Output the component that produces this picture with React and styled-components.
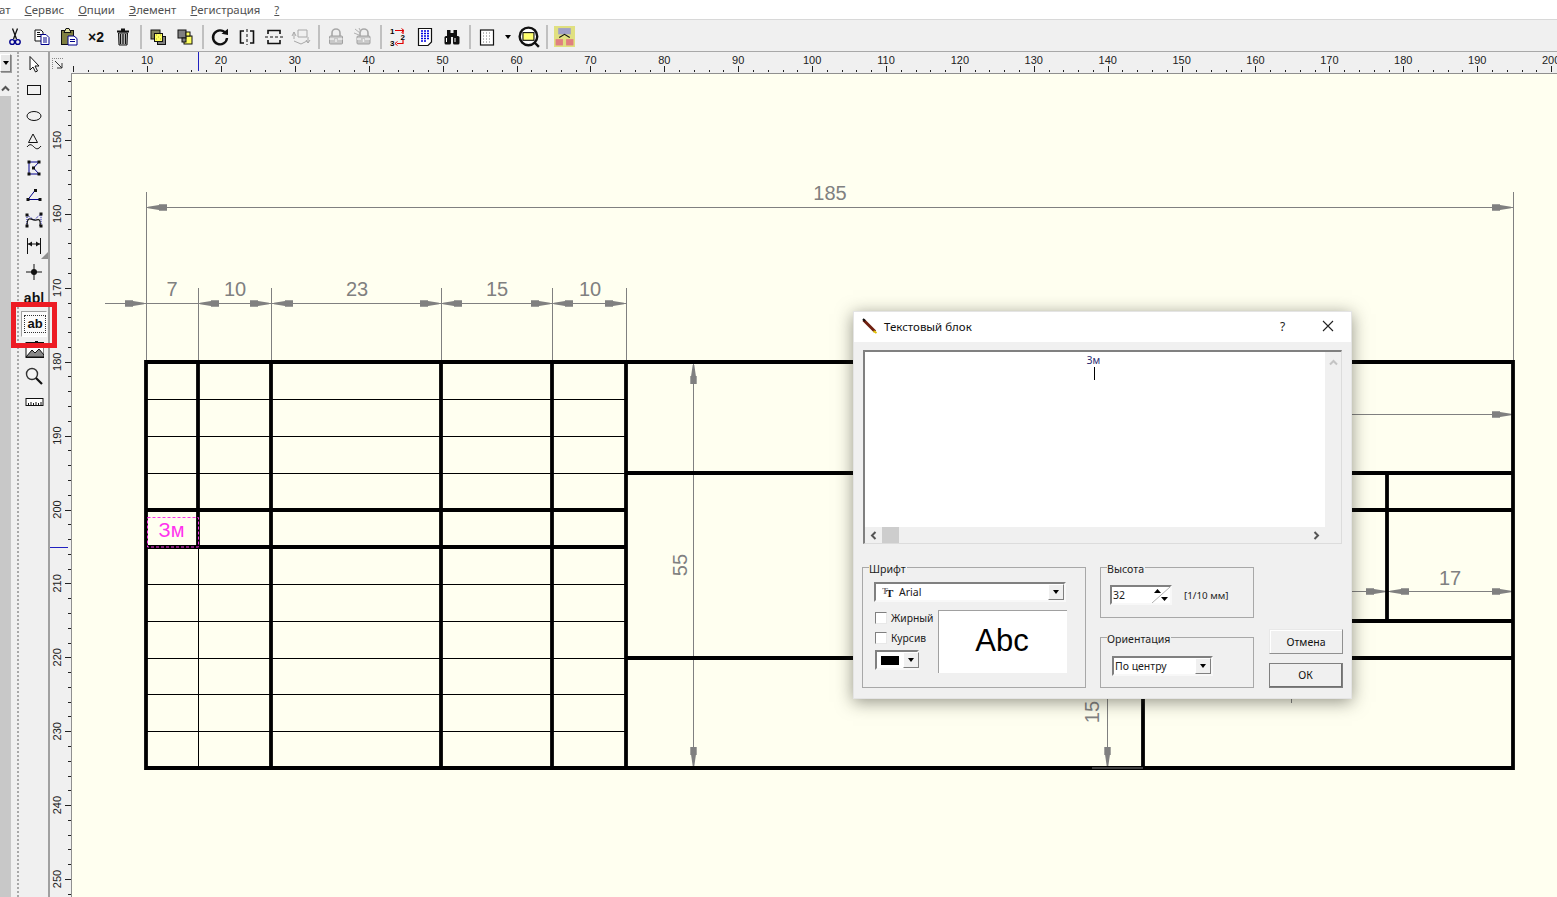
import React from "react";
import styled, { createGlobalStyle, css } from "styled-components";

const GlobalStyle = createGlobalStyle`
  html, body {
    margin: 0;
    padding: 0;
    background: #f0f0f0;
  }
  * {
    box-sizing: border-box;
  }
`;

const UI_FONT = `"Noto Sans", "Liberation Sans", sans-serif`;
const ARIAL = `"Liberation Sans", Arial, sans-serif`;

const sunken = css`
  border-style: solid;
  border-width: 2px;
  border-color: #808080 #f8f8f8 #f8f8f8 #808080;
`;

const raised = css`
  border-style: solid;
  border-width: 1px;
  border-color: #fff #808080 #808080 #fff;
  box-shadow: 1px 1px 0 #a0a0a0;
`;

const Page = styled.div`
  position: relative;
  width: 1557px;
  height: 897px;
  overflow: hidden;
  display: flex;
  flex-direction: column;
  background: #f0f0f0;
  font-family: ${UI_FONT};
  font-size: 11px;
  color: #202020;
`;

const MenuBar = styled.nav`
  height: 20px;
  display: flex;
  align-items: center;
  gap: 14px;
  margin-left: -1px;
  padding-bottom: 1px;
  background: #fff;
  border-bottom: 1px solid #d8d8d8;
  font-size: 11.4px;
  color: #505050;
`;

const MenuItem = styled.span`
  white-space: nowrap;
`;

const Toolbar = styled.div`
  height: 32px;
  display: flex;
  align-items: center;
  padding: 2px 0 0 1.5px;
  background: #f0f0f0;
  border-bottom: 1px solid #a8a8a8;
`;

const ToolBtn = styled.div`
  width: ${(p) => p.$w || 27}px;
  height: 26px;
  flex: none;
  display: flex;
  align-items: center;
  justify-content: center;
`;

const TimesTwo = styled.span`
  font-family: ${ARIAL};
  font-size: 14px;
  font-weight: 700;
  color: #111;
`;

const ToolSep = styled.div`
  width: 8px;
  height: 24px;
  flex: none;
  display: flex;
  justify-content: center;
  &::before {
    content: "";
    width: 2px;
    background: #c0c0c0;
  }
`;

const Workspace = styled.div`
  flex: 1;
  display: flex;
  min-height: 0;
`;

const LeftStrip = styled.div`
  width: 11px;
  flex: none;
  display: flex;
  flex-direction: column;
  padding-top: 2px;
`;

const StripCombo = styled.div`
  height: 18px;
  display: flex;
  align-items: center;
  justify-content: center;
  ${raised};
  background: #e8e8e8;
`;

const StripButton = styled.div`
  height: 16px;
  margin-top: 8px;
  display: flex;
  align-items: center;
  justify-content: center;
  background: #f0f0f0;
`;

const StripTrack = styled.div`
  flex: 1;
  background: #c8c8c8;
`;

const Gripper = styled.div`
  width: 9px;
  flex: none;
  height: 100%;
  border-right: 2px dotted #a8a8a8;
  transform: translateX(-1px);
`;

const Palette = styled.div`
  width: 28px;
  flex: none;
  margin-top: -1px;
  padding-left: 1px;
  display: flex;
  flex-direction: column;
  align-items: flex-start;
`;

const Tool = styled.div`
  position: relative;
  width: 26px;
  height: 26px;
  flex: none;
  display: flex;
  align-items: center;
  justify-content: center;
  border: 1px solid transparent;
  ${(p) =>
    p.$active &&
    css`
      background: #fbfbfb;
      border-color: #a0a0a0 #fff #fff #a0a0a0;
    `}
  ${(p) =>
    p.$flyout &&
    css`
      &::after {
        content: "";
        position: absolute;
        right: -2px;
        bottom: -1px;
        border-left: 7px solid transparent;
        border-bottom: 7px solid #909090;
      }
    `}
`;

const RulerArea = styled.div`
  flex: 1;
  display: grid;
  grid-template-columns: 21px 1fr;
  grid-template-rows: 21px 1fr;
  border-left: 2px solid #a0a0a0;
  min-width: 0;
`;

const Corner = styled.div`
  display: flex;
  align-items: center;
  justify-content: center;
  padding: 2px 6px 0 0;
`;

const HRuler = styled.svg`
  display: block;
  font-family: ${ARIAL};
  font-size: 11px;
`;

const VRuler = styled.svg`
  display: block;
  font-family: ${ARIAL};
  font-size: 11px;
`;

const Canvas = styled.div`
  position: relative;
  background: #fffff0;
  border-top: 1px solid #909090;
  border-left: 1px solid #909090;
  overflow: hidden;
`;

const Sheet = styled.svg`
  display: block;
`;

const Highlight = styled.div`
  position: absolute;
  left: 11px;
  top: 302px;
  width: 46px;
  height: 46px;
  border: 5px solid #ed1c24;
`;

const Dialog = styled.section`
  position: absolute;
  left: 853px;
  top: 311px;
  width: 499px;
  height: 388px;
  background: #f0f0f0;
  box-shadow: 0 3px 16px rgba(40, 40, 30, 0.5);
  border: 1px solid #e4e4e4;
  display: flex;
  flex-direction: column;
`;

const TitleBar = styled.header`
  height: 30px;
  flex: none;
  display: flex;
  align-items: center;
  background: #fff;
  padding: 0 1px 2px 8px;
`;

const TitleText = styled.span`
  margin-left: 6px;
  flex: 1;
  font-size: 11.5px;
  color: #111;
`;

const TitleBtn = styled.span`
  width: 45px;
  display: flex;
  align-items: center;
  justify-content: center;
  font-size: 12px;
  color: #222;
`;

const DialogBody = styled.div`
  flex: 1;
  padding: 8px 9px 0;
  display: flex;
  flex-direction: column;
`;

const TextBox = styled.div`
  height: 194px;
  flex: none;
  display: flex;
  flex-direction: column;
  ${sunken};
  border-bottom-width: 1px;
  border-right-width: 1px;
  border-bottom-color: #dcdcdc;
  border-right-color: #dcdcdc;
`;

const TextRow = styled.div`
  flex: 1;
  display: flex;
  min-height: 0;
`;

const TextArea = styled.div`
  flex: 1;
  background: #fff;
  display: flex;
  flex-direction: column;
  align-items: center;
  padding: 2px 3px 0 0;
  font-size: 10px;
  line-height: 12px;
  color: #2a2a70;
`;

const Caret = styled.i`
  display: block;
  width: 1px;
  height: 13px;
  background: #000;
  margin-top: 1px;
  margin-left: 1px;
`;

const VScroll = styled.div`
  width: 16px;
  flex: none;
  padding-top: 6px;
  display: flex;
  justify-content: center;
  align-items: flex-start;
`;

const HScroll = styled.div`
  height: 16px;
  flex: none;
  display: flex;
  align-items: center;
  padding-right: 20px;
`;

const ScrollEnd = styled.div`
  width: 17px;
  flex: none;
  display: flex;
  align-items: center;
  justify-content: center;
`;

const ScrollThumb = styled.div`
  width: 17px;
  height: 16px;
  flex: none;
  background: #cdcdcd;
`;

const ScrollGap = styled.div`
  flex: 1;
`;

const BottomRow = styled.div`
  display: flex;
  margin: 23px 0 0 -1px;
`;

const MiddleCol = styled.div`
  width: 154px;
  flex: none;
  margin-left: 14px;
  display: flex;
  flex-direction: column;
  gap: 19px;
`;

const ButtonCol = styled.div`
  width: 74px;
  flex: none;
  margin-left: 15px;
  display: flex;
  flex-direction: column;
  justify-content: flex-end;
  gap: 9px;
`;

const Group = styled.div`
  position: relative;
  flex: none;
  width: ${(p) => p.$w || "auto"};
  height: ${(p) => p.$h}px;
  padding: ${(p) => p.$pad};
  border: 1px solid #a8a8a8;
`;

const Legend = styled.span`
  position: absolute;
  top: -5px;
  left: 6px;
  padding-right: 1px;
  background: #f0f0f0;
  line-height: 12px;
  font-size: 10.6px;
  color: #222;
`;

const Combo = styled.div`
  width: ${(p) => p.$w}px;
  height: 20px;
  display: flex;
  align-items: center;
  background: #fff;
  ${sunken};
  padding-left: ${(p) => p.$pl || 0}px;
  gap: 3px;
`;

const ComboValue = styled.span`
  flex: 1;
  white-space: nowrap;
  font-size: 10.5px;
`;

const ComboButton = styled.span`
  width: 16px;
  height: 16px;
  flex: none;
  display: flex;
  align-items: center;
  justify-content: center;
  background: #f0f0f0;
  ${raised};
  box-shadow: none;
`;

const Triangle = styled.i`
  display: block;
  width: 0;
  height: 0;
  border-left: 3.5px solid transparent;
  border-right: 3.5px solid transparent;
  border-top: 4px solid #000;
`;

const FontOptions = styled.div`
  display: flex;
  margin-top: 8px;
`;

const OptionCol = styled.div`
  width: 64px;
  flex: none;
  margin-top: -2px;
`;

const CheckRow = styled.label`
  height: 20px;
  display: flex;
  align-items: center;
  gap: 4px;
  padding-left: 1px;
  white-space: nowrap;
  font-size: 10.3px;
`;

const CheckBox = styled.span`
  width: 12px;
  height: 12px;
  flex: none;
  background: #fff;
  border-style: solid;
  border-width: 1px;
  border-color: #808080 #e8e8e8 #e8e8e8 #808080;
`;

const ColorCombo = styled.div`
  width: 44px;
  height: 20px;
  margin: 2px 0 0 1px;
  display: flex;
  align-items: center;
  gap: 4px;
  padding-left: 4px;
  background: #fff;
  ${sunken};
`;

const Swatch = styled.span`
  width: 18px;
  height: 9px;
  flex: none;
  background: #000;
`;

const Preview = styled.div`
  width: 129px;
  height: 63px;
  padding: 0 2px 2px 0;
  display: flex;
  align-items: center;
  justify-content: center;
  background: #fff;
  border-top: 1px solid #a0a0a0;
  border-left: 1px solid #a0a0a0;
  font-family: ${ARIAL};
  font-size: 31px;
  color: #000;
`;

const SpinRow = styled.div`
  display: flex;
  align-items: center;
  gap: 12px;
`;

const SpinBox = styled.div`
  width: 62px;
  height: 20px;
  display: flex;
  align-items: center;
  justify-content: space-between;
  padding-left: 1px;
  background: #fff;
  ${sunken};
  font-size: 10.5px;
`;

const Units = styled.span`
  font-size: 9.8px;
`;

const DlgButton = styled.button`
  width: 74px;
  height: 25px;
  padding: 0;
  background: #f0f0f0;
  font-family: inherit;
  font-size: 10.5px;
  color: #111;
  border-style: solid;
  border-width: 1px;
  border-color: #fff #808080 #808080 #fff;
  ${(p) =>
    p.$default
      ? css`
          outline: 1px solid #808080;
          outline-offset: -1px;
          border-width: 1px 2px 2px 1px;
          border-color: #909090 #707070 #707070 #909090;
        `
      : css`
          border-color: #e8e8e8 #909090 #909090 #e8e8e8;
          box-shadow: inset 1px 1px 0 #fff;
        `}
`;

const Chev = ({ dir = "up", color = "#555", size = 9 }) => {
  const rot = { up: 0, right: 90, down: 180, left: 270 }[dir];
  return (
    <svg width={size} height={size} viewBox="0 0 9 9">
      <path
        d="M1 6.5 L4.5 3 L8 6.5"
        fill="none"
        stroke={color}
        strokeWidth="2"
        transform={`rotate(${rot} 4.5 4.5)`}
      />
    </svg>
  );
};

const Ico = ({ children, size = 20 }) => (
  <svg width={size} height={size} viewBox="0 0 20 20">
    {children}
  </svg>
);

const icons = {
  cut: (
    <Ico>
      <path d="M7.5 1.5 L11.5 12 M12.5 1.5 L8.5 12" stroke="#111" strokeWidth="1.3" fill="none" />
      <circle cx="7.2" cy="15" r="2.4" stroke="#00008c" strokeWidth="1.4" fill="none" />
      <circle cx="12.8" cy="15" r="2.4" stroke="#00008c" strokeWidth="1.4" fill="none" />
    </Ico>
  ),
  copy: (
    <Ico>
      <path d="M3 3 H9 L11 5 V14 H3 Z" fill="#fff" stroke="#111" />
      <path d="M5 5.5 H8 M5 7.5 H9 M5 9.5 H9" stroke="#111" />
      <path d="M9 7.5 H14 L17 10.5 V17.5 H9 Z" fill="#fff" stroke="#00008c" />
      <path d="M11 11 H15 M11 13 H15 M11 15 H15" stroke="#00008c" />
    </Ico>
  ),
  paste: (
    <Ico>
      <rect x="2.5" y="3.5" width="12" height="14" fill="#808040" stroke="#111" />
      <path d="M5 5.5 L7 1.5 H10 L12 5.5 Z" fill="#e0e0a0" stroke="#111" />
      <path d="M9 9 H15 L18 11.5 V18 H9 Z" fill="#fff" stroke="#00008c" />
      <path d="M11 12.5 H16 M11 14.5 H16" stroke="#00008c" />
    </Ico>
  ),
  trash: (
    <Ico>
      <path d="M8 2.5 H12 M4 4.5 H16" stroke="#111" strokeWidth="1.8" />
      <path d="M5.5 6 H14.5 L14 18 H6 Z" fill="#d0d0d0" stroke="#111" />
      <path d="M7.5 7 V17 M10 7 V17 M12.5 7 V17" stroke="#111" strokeWidth="1.3" />
    </Ico>
  ),
  front: (
    <Ico>
      <rect x="3" y="3" width="9" height="9" fill="#808060" stroke="#111" />
      <rect x="9.5" y="9.5" width="8" height="8" fill="#808080" stroke="#111" />
      <rect x="6.5" y="6.5" width="8" height="8" fill="#ffff60" stroke="#111" />
      <path d="M8 8 H9 M10 10 H11 M12 8 H13 M8 12 H9 M12 12 H13" stroke="#b0b030" />
    </Ico>
  ),
  back: (
    <Ico>
      <rect x="9" y="9" width="8" height="8" fill="#ffff60" stroke="#111" />
      <rect x="3" y="3" width="8" height="8" fill="#808080" stroke="#111" />
      <rect x="11" y="5" width="4" height="4" fill="#ffff60" stroke="#111" />
      <rect x="7" y="11" width="4" height="4" fill="#808080" stroke="#111" />
    </Ico>
  ),
  rotate: (
    <Ico>
      <path d="M15.5 6 A7 7 0 1 0 17 11" fill="none" stroke="#111" strokeWidth="2.4" />
      <path d="M11.5 6.8 L18 8 V1.8 Z" fill="#111" />
    </Ico>
  ),
  mirrorH: (
    <Ico>
      <path d="M7 4 H3.5 V16 H7 M13 4 H16.5 V16 H13" fill="none" stroke="#111" strokeWidth="1.6" />
      <path d="M10 2 V18" stroke="#111" strokeDasharray="3 2" />
    </Ico>
  ),
  mirrorV: (
    <Ico>
      <path d="M4 7 V3.5 H16 V7 M4 13 V16.5 H16 V13" fill="none" stroke="#111" strokeWidth="1.6" />
      <path d="M1 10 H19" stroke="#111" strokeDasharray="3 2" />
    </Ico>
  ),
  transform: (
    <Ico>
      <path d="M7 3 H16 V10 H7 Z M1 9 L3 5 L5 9 M3 5 V12 M15 13 L17 16 L19 13 M17 10 V16 M3 14 L10 17 L16 14" fill="none" stroke="#a8a8a8" />
    </Ico>
  ),
  lock: (
    <Ico>
      <path d="M6 9 V6 A4 4 0 0 1 14 6 V9" fill="none" stroke="#a8a8a8" strokeWidth="1.6" />
      <rect x="3.5" y="9" width="13" height="8" rx="1" fill="#c8c8c8" stroke="#a0a0a0" />
      <path d="M3.5 12 H8 M12 12 H16.5 M10 12 V15" stroke="#f0f0f0" strokeWidth="1.4" />
    </Ico>
  ),
  unlock: (
    <Ico>
      <path d="M7 9 V6 A4 4 0 0 1 15 6 V9" fill="none" stroke="#a8a8a8" strokeWidth="1.6" />
      <path d="M2 2 L7 6 M1 6 L6 8 M6 1 L8 5" stroke="#b0b0b0" />
      <rect x="4" y="9" width="13" height="8" rx="1" fill="#c8c8c8" stroke="#a0a0a0" />
      <path d="M4 12 H8 M12 12 H17 M10.5 12 V15" stroke="#f0f0f0" strokeWidth="1.4" />
    </Ico>
  ),
  order: (
    <Ico>
      <path d="M7 3.5 H15 V7 M15 13 V16.5 H9" fill="none" stroke="#e00000" strokeWidth="1.2" />
      <path d="M13.5 1.5 L16 3.5 L13.5 5.5 M9.5 14.5 L7 16.5 L9.5 18.5" fill="none" stroke="#e00000" />
      <text x="2" y="7" fontFamily={ARIAL} fontSize="8" fontWeight="700">1</text>
      <text x="12.5" y="12.5" fontFamily={ARIAL} fontSize="8" fontWeight="700">2</text>
      <text x="2" y="19" fontFamily={ARIAL} fontSize="8" fontWeight="700">3</text>
    </Ico>
  ),
  listing: (
    <Ico>
      <path d="M3.5 1.5 H16.5 V15 L13 18.5 H3.5 Z" fill="#fff" stroke="#111" strokeWidth="1.2" />
      <path d="M6 4 H14 M6 6.5 H14 M6 9 H14 M6 11.5 H14 M6 14 H11" stroke="#0000e0" strokeWidth="1.3" strokeDasharray="2 1" />
    </Ico>
  ),
  find: (
    <Ico>
      <rect x="5" y="3" width="3.5" height="8" fill="#111" />
      <rect x="11.5" y="3" width="3.5" height="8" fill="#111" />
      <rect x="8" y="6" width="4" height="4" fill="#111" />
      <rect x="2.5" y="9" width="6.5" height="8.5" rx="1.5" fill="#111" />
      <rect x="11" y="9" width="6.5" height="8.5" rx="1.5" fill="#111" />
      <path d="M4.5 11 V15 M13 11 V15" stroke="#fff" />
    </Ico>
  ),
  grid: (
    <Ico>
      <rect x="3.5" y="3" width="13" height="15" fill="#fff" stroke="#111" strokeWidth="1.2" />
      <path d="M6 6 H14 M6 9 H14 M6 12 H14 M6 15 H14" stroke="#777" strokeDasharray="1 2" />
    </Ico>
  ),
  zoomFit: (
    <Ico size={22}>
      <circle cx="9.5" cy="9.5" r="8" fill="#fff" stroke="#111" strokeWidth="2.2" />
      <rect x="4.5" y="6" width="10" height="7" fill="#ffff70" stroke="#111" />
      <path d="M15 15 L19 19" stroke="#111" strokeWidth="2.2" />
    </Ico>
  ),
  tree: (
    <Ico size={21}>
      <rect width="20" height="20" fill="#e0e080" />
      <rect x="4" y="2" width="12" height="6" fill="#a0a0c8" />
      <rect x="1.5" y="12.5" width="7" height="6" fill="#e08080" />
      <rect x="11.5" y="12.5" width="7" height="6" fill="#e08080" />
      <path d="M5 11 L10 8 L15 11" fill="none" stroke="#111" />
    </Ico>
  ),
};

const palette = {
  arrow: (
    <Ico>
      <path d="M6 2.5 V16 L9 13 L11.5 18 L13.5 17 L11 12 H15 Z" fill="#fff" stroke="#111" />
    </Ico>
  ),
  rect: (
    <Ico>
      <rect x="3.5" y="5.5" width="13" height="9" fill="none" stroke="#111" />
    </Ico>
  ),
  ellipse: (
    <Ico>
      <ellipse cx="10" cy="10" rx="7" ry="4.5" fill="none" stroke="#111" />
    </Ico>
  ),
  polygon: (
    <Ico>
      <path d="M9 2 L13.5 10.5 H4.5 Z" fill="none" stroke="#111" />
      <path d="M3 15 C6 11 8 13 10 15 S14 18 17 14" fill="none" stroke="#111" />
    </Ico>
  ),
  poly: (
    <Ico>
      <path d="M5 4 L15 4 L9.5 10 L15 16 H5 Z" fill="none" stroke="#00008c" />
      <path d="M3.5 2.5 h3 v3 h-3 z M13.5 2.5 h3 v3 h-3 z M8 8.5 h3 v3 h-3 z M13.5 14.5 h3 v3 h-3 z M3.5 14.5 h3 v3 h-3 z" fill="#111" />
    </Ico>
  ),
  polyline: (
    <Ico>
      <path d="M4 15.5 L11 6.5 M4 15.5 H16" fill="none" stroke="#00008c" />
      <path d="M2.5 14 h3 v3 h-3 z M10 5 h3 v3 h-3 z M14.5 14 h3 v3 h-3 z" fill="#111" />
    </Ico>
  ),
  bezier: (
    <Ico>
      <path d="M3 16 L3 5 L10 10 L17 4 L17 16" fill="none" stroke="#00a" strokeDasharray="1 1" />
      <path d="M3 16 C3 6 7 9 10 10 S17 6 16 16" fill="none" stroke="#111" strokeWidth="1.2" />
      <path d="M1.5 3.5 h3 v3 h-3 z M15.5 2.5 h3 v3 h-3 z M1.5 14.5 h3 v3 h-3 z M15.5 14.5 h3 v3 h-3 z" fill="#111" />
    </Ico>
  ),
  dim: (
    <Ico>
      <path d="M3.5 2 V18 M16.5 2 V18 M4 8 H16" stroke="#111" />
      <path d="M4 8 L8 5.5 V10.5 Z M16 8 L12 5.5 V10.5 Z" fill="#111" />
    </Ico>
  ),
  node: (
    <Ico>
      <path d="M10 2 V18 M2 10 H18" stroke="#111" />
      <circle cx="10" cy="10" r="3" fill="#111" />
    </Ico>
  ),
  image: (
    <Ico>
      <rect x="2" y="2.5" width="18" height="15" fill="#fff" stroke="#111" />
      <path d="M2 17 L8 10 L11 13 L15 9 L20 15 V17 Z" fill="#888" stroke="#111" />
      <path d="M11 1 H14 V6 H11 Z" fill="#111" />
    </Ico>
  ),
  zoom: (
    <Ico>
      <circle cx="8" cy="8" r="5.5" fill="#f4f4f4" stroke="#333" strokeWidth="1.4" />
      <path d="M12 12 L18 18" stroke="#111" strokeWidth="2.2" />
    </Ico>
  ),
  ruler: (
    <Ico>
      <rect x="2" y="6.5" width="17" height="7" fill="#fff" stroke="#111" />
      <path d="M4.5 11 V13 M7 10 V13 M9.5 11 V13 M12 10 V13 M14.5 11 V13 M17 10 V13" stroke="#111" />
    </Ico>
  ),
};

const AbText = styled.span`
  font-family: ${ARIAL};
  font-weight: 700;
  font-size: 14px;
  line-height: 14px;
  color: #111;
  ${(p) =>
    p.$boxed &&
    css`
      outline: 1px dotted #333;
      padding: 1px 2px;
      margin-left: 2px;
      font-size: 13px;
    `}
`;

const toolbarItems = [
  "cut", "copy", "paste", "x2", "trash", "|",
  "front", "back", "|",
  "rotate", "mirrorH", "mirrorV", "transform", "|",
  "lock", "unlock", "|",
  "order", "listing", "find", "|",
  "grid", "drop", "zoomFit", "|",
  "tree",
];

const paletteItems = [
  "arrow", "rect", "ellipse", "polygon", "poly", "polyline", "bezier",
  "dim", "node", "ab", "abBox", "image", "zoom", "ruler",
];

const HR_X = (u) => 73.1 + 7.39 * u;
const VR_Y = (u) => 140 + 7.39 * (u - 150);

const range = (from, to, step) => {
  const out = [];
  for (let v = from; v <= to; v += step) out.push(v);
  return out;
};

const HorizontalRuler = () => (
  <HRuler width="1486" height="21" viewBox="71 52 1486 21">
    {range(0, 202, 2).map((u) => {
      const x = Math.round(HR_X(u)) + 0.5;
      const major = u % 10 === 0;
      return <line key={u} x1={x} x2={x} y1={major ? 66 : 70} y2={72} stroke="#222" />;
    })}
    {range(10, 200, 10).map((u) => (
      <text key={u} x={HR_X(u)} y={64} textAnchor="middle" fill="#222">
        {u}
      </text>
    ))}
    <line x1="198.5" x2="198.5" y1="52" y2="71" stroke="#2020c0" />
  </HRuler>
);

const VerticalRuler = () => (
  <VRuler width="21" height="824" viewBox="50 73 21 824">
    {range(142, 252, 2).map((u) => {
      const y = Math.round(VR_Y(u)) + 0.5;
      const major = u % 10 === 0;
      return <line key={u} x1={major ? 65 : 68} x2={71} y1={y} y2={y} stroke="#222" />;
    })}
    {range(150, 250, 10).map((u) => (
      <text
        key={u}
        x={61}
        y={VR_Y(u)}
        textAnchor="middle"
        fill="#222"
        transform={`rotate(-90 61 ${VR_Y(u)})`}
      >
        {u}
      </text>
    ))}
    <line x1="50" x2="68" y1="547.5" y2="547.5" stroke="#2020c0" />
  </VRuler>
);

const GRAY = "#808080";

const Arrow = ({ x, y, dir }) => {
  const rot = { right: 0, left: 180, up: 270, down: 90 }[dir];
  return (
    <polygon
      points="0,-0.8 -11,-2.4 -11,-3.2 -19,-3.2 -19,3.2 -11,3.2 -11,2.4 0,0.8"
      fill={GRAY}
      transform={`translate(${x} ${y}) rotate(${rot})`}
    />
  );
};

const thickLines = [
  [146, 362, 1513, 362],
  [146, 768, 1513, 768],
  [146, 360, 146, 770],
  [1513, 360, 1513, 770],
  [198, 362, 198, 547],
  [271, 362, 271, 768],
  [441, 362, 441, 768],
  [552, 362, 552, 768],
  [626, 362, 626, 768],
  [146, 510, 626, 510],
  [146, 547, 626, 547],
  [626, 473, 1513, 473],
  [626, 658, 1513, 658],
  [1143, 510, 1513, 510],
  [1143, 621, 1513, 621],
  [1387, 473, 1387, 621],
  [1143, 658, 1143, 768],
];

const thinLines = [
  ...[399, 436, 473, 584, 621, 658, 694, 731].map((y) => [146, y + 0.5, 626, y + 0.5]),
  [198.5, 547, 198.5, 768],
];

const dimLines = [
  [146, 207.5, 1513, 207.5],
  [105, 303.5, 626, 303.5],
  [146.5, 192, 146.5, 362],
  [1513.5, 192, 1513.5, 362],
  [198.5, 288, 198.5, 362],
  [271.5, 288, 271.5, 362],
  [441.5, 288, 441.5, 362],
  [552.5, 288, 552.5, 362],
  [626.5, 288, 626.5, 362],
  [693.5, 364, 693.5, 766],
  [1340, 414.5, 1513, 414.5],
  [1513.5, 399, 1513.5, 470],
  [1340, 591.5, 1513, 591.5],
  [1513.5, 591, 1513.5, 607],
  [1107.5, 690, 1107.5, 768],
  [1291.5, 695, 1291.5, 703],
];

const arrows = [
  [148, 207.5, "left"],
  [1511, 207.5, "right"],
  [144, 303.5, "right"],
  [200, 303.5, "left"],
  [269, 303.5, "right"],
  [274, 303.5, "left"],
  [439, 303.5, "right"],
  [443, 303.5, "left"],
  [550, 303.5, "right"],
  [554, 303.5, "left"],
  [624, 303.5, "right"],
  [1511, 414.5, "right"],
  [1385, 591.5, "right"],
  [1390, 591.5, "left"],
  [1511, 591.5, "right"],
  [693.5, 365, "up"],
  [693.5, 766, "down"],
  [1107.5, 766, "down"],
];

const dimLabels = [
  ["185", 830, 200],
  ["7", 172, 296],
  ["10", 235, 296],
  ["23", 357, 296],
  ["15", 497, 296],
  ["10", 590, 296],
  ["17", 1450, 585],
];

const Drawing = () => (
  <Sheet width="1485" height="823" viewBox="72 74 1485 823">
    {dimLines.map(([x1, y1, x2, y2], i) => (
      <line key={i} x1={x1} y1={y1} x2={x2} y2={y2} stroke={GRAY} />
    ))}
    {thickLines.map(([x1, y1, x2, y2], i) => (
      <line key={i} x1={x1} y1={y1} x2={x2} y2={y2} stroke="#000" strokeWidth="3.8" />
    ))}
    {thinLines.map(([x1, y1, x2, y2], i) => (
      <line key={i} x1={x1} y1={y1} x2={x2} y2={y2} stroke="#000" strokeWidth="1" />
    ))}
    <line x1="1092" y1="768" x2="1143" y2="768" stroke={GRAY} />
    {arrows.map(([x, y, dir], i) => (
      <Arrow key={i} x={x} y={y} dir={dir} />
    ))}
    <g fontFamily={ARIAL} fontSize="20" fill={GRAY} textAnchor="middle">
      {dimLabels.map(([t, x, y], i) => (
        <text key={i} x={x} y={y}>
          {t}
        </text>
      ))}
      <text x="687" y="565" transform="rotate(-90 687 565)">
        55
      </text>
      <text x="1099" y="712" transform="rotate(-90 1099 712)">
        15
      </text>
    </g>
    <rect x="147.5" y="517.5" width="51" height="29.5" fill="none" stroke="#ff33ee" strokeDasharray="3 2" />
    <text x="171.5" y="536.5" fontFamily={ARIAL} fontSize="20" fill="#ff33ee" textAnchor="middle">
      Зм
    </text>
  </Sheet>
);

const MENU = [
  [null, "ат"],
  ["С", "ервис"],
  ["О", "пции"],
  ["Э", "лемент"],
  ["Р", "егистрация"],
  ["?", ""],
];

export default function App() {
  return (
    <Page>
      <GlobalStyle />
      <MenuBar>
        {MENU.map(([u, rest]) => (
          <MenuItem key={rest + u}>
            {u && <u>{u}</u>}
            {rest}
          </MenuItem>
        ))}
      </MenuBar>

      <Toolbar>
        {toolbarItems.map((name, i) => {
          if (name === "|") return <ToolSep key={i} />;
          if (name === "x2")
            return (
              <ToolBtn key={i}>
                <TimesTwo>×2</TimesTwo>
              </ToolBtn>
            );
          if (name === "drop")
            return (
              <ToolBtn key={i} $w={15}>
                <Triangle />
              </ToolBtn>
            );
          return <ToolBtn key={i}>{icons[name]}</ToolBtn>;
        })}
      </Toolbar>

      <Workspace>
        <LeftStrip>
          <StripCombo>
            <Triangle />
          </StripCombo>
          <StripButton>
            <Chev dir="up" />
          </StripButton>
          <StripTrack />
        </LeftStrip>
        <Gripper />
        <Palette>
          {paletteItems.map((name) => {
            if (name === "ab")
              return (
                <Tool key={name}>
                  <AbText>ab|</AbText>
                </Tool>
              );
            if (name === "abBox")
              return (
                <Tool key={name} $active>
                  <AbText $boxed>ab</AbText>
                </Tool>
              );
            return (
              <Tool key={name} $flyout={name === "dim"}>
                {palette[name]}
              </Tool>
            );
          })}
        </Palette>
        <RulerArea>
          <Corner>
            <svg width="14" height="14" viewBox="0 0 14 14">
              <path d="M1 1.5 H12 M1.5 1 V12" stroke="#888" strokeDasharray="1 1" />
              <path d="M4 4 L11 11 M11 6 V11 H6" fill="none" stroke="#333" />
            </svg>
          </Corner>
          <HorizontalRuler />
          <VerticalRuler />
          <Canvas>
            <Drawing />
          </Canvas>
        </RulerArea>
      </Workspace>

      <Highlight />

      <Dialog>
        <TitleBar>
          <svg width="16" height="16" viewBox="0 0 16 16">
            <path d="M1.5 2 L13 13.5" stroke="#702010" strokeWidth="3" />
            <path d="M11.5 13 L14.5 15" stroke="#e0c000" strokeWidth="2" />
            <path d="M1 1 L3 3" stroke="#111" strokeWidth="2" />
          </svg>
          <TitleText>Текстовый блок</TitleText>
          <TitleBtn>?</TitleBtn>
          <TitleBtn>
            <svg width="12" height="12" viewBox="0 0 12 12">
              <path d="M1 1 L11 11 M11 1 L1 11" stroke="#222" strokeWidth="1.1" />
            </svg>
          </TitleBtn>
        </TitleBar>
        <DialogBody>
          <TextBox>
            <TextRow>
              <TextArea>
                Зм
                <Caret />
              </TextArea>
              <VScroll>
                <Chev dir="up" color="#c4c4c4" />
              </VScroll>
            </TextRow>
            <HScroll>
              <ScrollEnd>
                <Chev dir="left" />
              </ScrollEnd>
              <ScrollThumb />
              <ScrollGap />
              <Chev dir="right" />
            </HScroll>
          </TextBox>

          <BottomRow>
            <Group $w="224px" $h={121} $pad="14px 0 0 11px">
              <Legend>Шрифт</Legend>
              <Combo $w={192} $pl={6}>
                <svg width="14" height="12" viewBox="0 0 14 12">
                  <text x="0" y="8" fontFamily='"Liberation Serif", serif' fontSize="9" fontWeight="700" fill="#777">T</text>
                  <text x="4" y="11" fontFamily='"Liberation Serif", serif' fontSize="11" fontWeight="700" fill="#111">T</text>
                </svg>
                <ComboValue>Arial</ComboValue>
                <ComboButton>
                  <Triangle />
                </ComboButton>
              </Combo>
              <FontOptions>
                <OptionCol>
                  <CheckRow>
                    <CheckBox />
                    Жирный
                  </CheckRow>
                  <CheckRow>
                    <CheckBox />
                    Курсив
                  </CheckRow>
                  <ColorCombo>
                    <Swatch />
                    <ComboButton>
                      <Triangle />
                    </ComboButton>
                  </ColorCombo>
                </OptionCol>
                <Preview>Abc</Preview>
              </FontOptions>
            </Group>

            <MiddleCol>
              <Group $h={51} $pad="17px 0 0 9px">
                <Legend>Высота</Legend>
                <SpinRow>
                  <SpinBox>
                    32
                    <svg width="18" height="16" viewBox="0 0 18 16">
                      <path d="M0 16 L18 0" stroke="#b0b0b0" />
                      <path d="M2 6 L5.5 2 L9 6 Z M9 10 H16 L12.5 14 Z" fill="#000" />
                    </svg>
                  </SpinBox>
                  <Units>[1/10 мм]</Units>
                </SpinRow>
              </Group>
              <Group $h={51} $pad="18px 0 0 11px">
                <Legend>Ориентация</Legend>
                <Combo $w={101} $pl={1}>
                  <ComboValue>По центру</ComboValue>
                  <ComboButton>
                    <Triangle />
                  </ComboButton>
                </Combo>
              </Group>
            </MiddleCol>

            <ButtonCol>
              <DlgButton>Отмена</DlgButton>
              <DlgButton $default>ОК</DlgButton>
            </ButtonCol>
          </BottomRow>
        </DialogBody>
      </Dialog>
    </Page>
  );
}
